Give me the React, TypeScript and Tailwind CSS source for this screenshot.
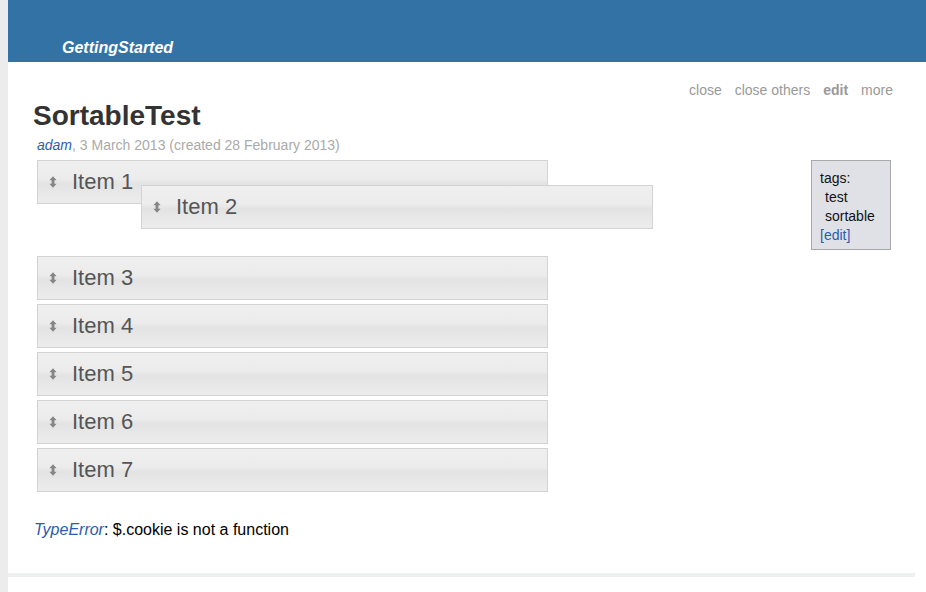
import React from "react"

const items = ["Item 1", "Item 3", "Item 4", "Item 5", "Item 6", "Item 7"]

function DragIcon() {
  return (
    <svg width="8" height="12" viewBox="0 0 8 12" className="shrink-0">
      <path d="M4 0.3 L7.6 4.2 L5.4 4.2 L5.4 7.8 L7.6 7.8 L4 11.7 L0.4 7.8 L2.6 7.8 L2.6 4.2 L0.4 4.2 Z" fill="#858585" />
    </svg>
  )
}

function SortItem({ label, className = "" }: { label: string; className?: string }) {
  return (
    <div
      className={`flex h-[44px] items-center gap-[15px] border border-[#d3d3d3] bg-[linear-gradient(to_bottom,#efefef_0%,#ececec_42%,#e3e3e3_55%,#e8e8e8_75%,#ececec_100%)] pl-[11px] text-[22px] text-[#555555] ${className}`}
    >
      <DragIcon />
      <span className="leading-none">{label}</span>
    </div>
  )
}

export default function App() {
  return (
    <div className="flex min-h-[592px] bg-white font-['Liberation_Sans',Arial,sans-serif]">
      {/* left gutter */}
      <div className="w-[8px] shrink-0 bg-[#ececec]" />

      <div className="relative flex-1">
        {/* header */}
        <div className="h-[62px] bg-[#3372a4] pl-[54px] pt-[36px]">
          <span className="text-[16px] font-bold italic leading-none text-white">GettingStarted</span>
        </div>

        <div className="pl-[25px] pr-[33px]">
          {/* toolbar */}
          <div className="flex justify-end gap-[13px] pt-[20px] text-[14px] leading-[16px] text-[#999999]">
            <span>close</span>
            <span>close others</span>
            <span className="font-bold">edit</span>
            <span>more</span>
          </div>

          <h1 className="mt-[1px] text-[28px] font-bold leading-[34px] text-[#333333]">SortableTest</h1>
          <div className="mt-[3px] pl-[4px] text-[14px] leading-[18px] text-[#aaaaaa]">
            <span className="italic text-[#2a5db0]">adam</span>, 3 March 2013 (created 28 February 2013)
          </div>

          <div className="mt-[6px] flex items-start justify-between">
            <div className="ml-[4px] flex w-[511px] flex-col gap-[4px]">
              <SortItem label={items[0]} />
              {/* placeholder for the dragged item */}
              <div className="h-[44px]" />
              {items.slice(1).map((label) => (
                <SortItem key={label} label={label} />
              ))}
            </div>

            <div className="mr-[2px] h-[90px] w-[80px] border border-[#a9a9a9] bg-[#dfe1e7] pl-[8px] pt-[8px] text-[14px] leading-[19px] text-[#111111]">
              <div>tags:</div>
              <div className="pl-[5px]">test</div>
              <div className="pl-[5px]">sortable</div>
              <div className="text-[#2a5db0]">[edit]</div>
            </div>
          </div>

          <div className="mt-[28px] pl-[1px] text-[16px] leading-[20px] text-black">
            <span className="italic text-[#2a5db0]">TypeError</span>: $.cookie is not a function
          </div>
        </div>

        <div className="mr-[11px] mt-[33px] h-[4px] bg-[#eef0f0]" />

        {/* item being dragged */}
        <SortItem label="Item 2" className="absolute left-[133px] top-[185px] w-[512px]" />
      </div>
    </div>
  )
}
